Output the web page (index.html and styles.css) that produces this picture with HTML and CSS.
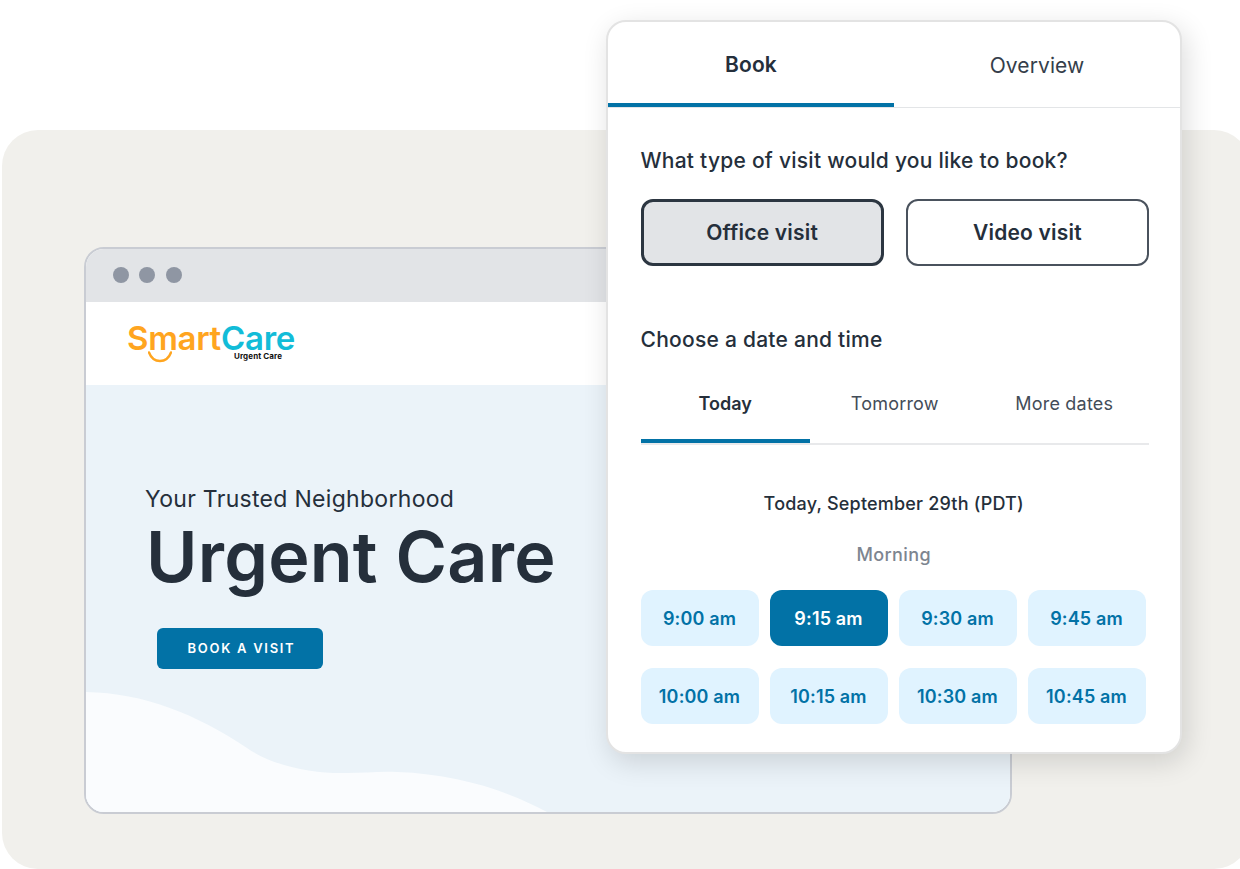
FILE: index.html
```html
<!DOCTYPE html>
<html>
<head>
    <meta charset="utf-8">
    <title>SmartCare Urgent Care</title>
    <link rel="stylesheet" href="styles.css">
</head>
<body>
    <div class="backdrop">
        <div class="browser">
            <div class="browser-bar">
                <span class="dot"></span>
                <span class="dot"></span>
                <span class="dot"></span>
            </div>
            <div class="site-header">
                <div class="logo">
                    <div class="logo-name"><span class="logo-smart">Smart</span><span class="logo-care">Care</span></div>
                    <svg class="logo-smile" width="24" height="12" viewBox="0 0 24 12">
                        <path d="M1 1.5C3 7 7 10 12 10S21 7 23 1.5" fill="none" stroke="#ffa51f" stroke-width="2.4" stroke-linecap="round"/>
                    </svg>
                    <div class="logo-sub">Urgent Care</div>
                </div>
            </div>
            <div class="hero">
                <p class="hero-kicker">Your Trusted Neighborhood</p>
                <h1 class="hero-title">Urgent Care</h1>
                <div class="hero-btn">BOOK A VISIT</div>
                <svg class="hero-wave" width="461" height="122" viewBox="0 0 461 122">
                    <path d="M0 2C58 3 110 24 161 58C190 78 232 84 261 83C278 83 295 81 311 82C370 84 420 100 461 122L0 122Z" fill="#fafcfe"/>
                </svg>
            </div>
        </div>
    </div>

    <div class="panel">
        <div class="tabs">
            <div class="tab active">Book</div>
            <div class="tab">Overview</div>
        </div>
        <div class="panel-body">
            <div class="question">What type of visit would you like to book?</div>
            <div class="visit-types">
                <div class="visit-btn selected">Office visit</div>
                <div class="visit-btn">Video visit</div>
            </div>
            <div class="question date-question">Choose a date and time</div>
            <div class="date-tabs">
                <div class="date-tab active">Today</div>
                <div class="date-tab">Tomorrow</div>
                <div class="date-tab">More dates</div>
            </div>
            <div class="date-label">Today, September 29th (PDT)</div>
            <div class="period-label">Morning</div>
            <div class="slots">
                <div class="slot">9:00 am</div>
                <div class="slot active">9:15 am</div>
                <div class="slot">9:30 am</div>
                <div class="slot">9:45 am</div>
                <div class="slot">10:00 am</div>
                <div class="slot">10:15 am</div>
                <div class="slot">10:30 am</div>
                <div class="slot">10:45 am</div>
            </div>
        </div>
    </div>
</body>
</html>
```

FILE: styles.css
```css
* {
    margin: 0;
    padding: 0;
    box-sizing: border-box;
}

html,
body {
    height: 869px;
    overflow: hidden;
}

body {
    position: relative;
    background: white;
    font-family: Inter, "Noto Sans", sans-serif;
    color: #252f3b;
    padding-top: 130px;
    padding-left: 2px;
}

.backdrop {
    width: 1248px;
    height: 739px;
    background: #f1f0ec;
    border-radius: 36px;
    padding: 117px 0 0 82px;
}

/* browser window */
.browser {
    width: 928px;
    height: 567px;
    border: 2px solid #c9ccd3;
    border-radius: 20px;
    overflow: hidden;
    display: flex;
    flex-direction: column;
    background: white;
}

.browser-bar {
    height: 53px;
    flex-shrink: 0;
    background: #e2e4e7;
    display: flex;
    align-items: center;
    gap: 10.5px;
    padding: 0 0 1px 26.7px;
}

.dot {
    width: 16px;
    height: 16px;
    border-radius: 50%;
    background: #8f96a3;
}

.site-header {
    height: 83px;
    flex-shrink: 0;
    padding: 22px 0 0 41px;
}

.logo {
    position: relative;
    width: 170px;
}

.logo-name {
    font-size: 33px;
    font-weight: 600;
    line-height: 28px;
    letter-spacing: -0.3px;
}

.logo-smart {
    color: #ffa51f;
}

.logo-care {
    color: #12bcd8;
}

.logo-smile {
    position: absolute;
    left: 21px;
    top: 27px;
}

.logo-sub {
    position: absolute;
    left: 107px;
    top: 28px;
    font-size: 8px;
    line-height: 9px;
    font-weight: 700;
    letter-spacing: 0.1px;
    color: #111;
}

.hero {
    position: relative;
    flex: 1;
    background: #ebf3f9;
    padding: 99px 0 0 59px;
}

.hero-kicker {
    font-size: 23px;
    line-height: 30px;
    letter-spacing: 0.3px;
}

.hero-title {
    font-size: 70px;
    font-weight: 600;
    line-height: 88px;
    margin: -1px 0 0 1px;
    letter-spacing: 0.2px;
}

.hero-btn {
    width: 166px;
    height: 41px;
    margin: 27px 0 0 12px;
    padding: 0 0 1px 3px;
    background: #0272a6;
    border-radius: 6px;
    color: white;
    font-size: 13px;
    font-weight: 600;
    letter-spacing: 1.7px;
    display: flex;
    align-items: center;
    justify-content: center;
}

.hero-wave {
    position: absolute;
    left: 0;
    bottom: 0;
}

/* booking panel */
.panel {
    position: absolute;
    left: 606px;
    top: 20px;
    width: 576px;
    height: 734px;
    background: white;
    border: 2px solid #e3e3e3;
    border-radius: 20px;
    box-shadow: 4px 8px 28px rgba(0,0,0,0.14);
}

.tabs {
    display: flex;
    height: 86px;
    border-bottom: 1px solid #e3e5e7;
}

.tab {
    flex: 1;
    display: flex;
    align-items: center;
    justify-content: center;
    padding-top: 1px;
    font-size: 21px;
    letter-spacing: 0.1px;
    color: #353e4a;
}

.tab.active {
    padding-top: 4px;
    font-weight: 600;
    color: #252f3b;
    border-bottom: 4px solid #0272a6;
}

.panel-body {
    padding: 39px 31px 0 32.5px;
}

.question {
    font-size: 21px;
    font-weight: 500;
    line-height: 28px;
    letter-spacing: 0.25px;
}

.visit-types {
    display: grid;
    grid-template-columns: 1fr 1fr;
    gap: 22px;
    margin-top: 24px;
}

.visit-btn {
    height: 67px;
    display: flex;
    align-items: center;
    justify-content: center;
    border: 2px solid #4a525d;
    border-radius: 12px;
    font-size: 21px;
    font-weight: 600;
    letter-spacing: 0.2px;
}

.visit-btn.selected {
    border: 3px solid #2c3641;
    background: #e2e4e7;
}

.date-question {
    margin-top: 60px;
}

.date-tabs {
    display: flex;
    margin-top: 22px;
    height: 69px;
    border-bottom: 2px solid #e8e9eb;
}

.date-tab {
    flex: 1;
    display: flex;
    align-items: center;
    justify-content: center;
    padding-bottom: 12px;
    font-size: 18px;
    letter-spacing: 0.2px;
    color: #434c58;
}

.date-tab.active {
    padding-bottom: 9px;
    font-weight: 600;
    letter-spacing: 0;
    color: #252f3b;
    border-bottom: 4px solid #0272a6;
}

.date-label {
    margin-top: 47px;
    padding-right: 2px;
    text-align: center;
    font-size: 18px;
    font-weight: 500;
    line-height: 24px;
    letter-spacing: 0.2px;
}

.period-label {
    margin-top: 27px;
    padding-right: 2px;
    text-align: center;
    font-size: 18px;
    font-weight: 500;
    line-height: 24px;
    letter-spacing: 0.4px;
    color: #7d8590;
}

.slots {
    display: grid;
    grid-template-columns: repeat(4, 118px);
    column-gap: 11px;
    row-gap: 22px;
    margin-top: 23px;
}

.slot {
    height: 56px;
    display: flex;
    align-items: center;
    justify-content: center;
    background: #e0f3ff;
    border-radius: 12px;
    color: #0272a6;
    font-size: 18px;
    font-weight: 600;
    letter-spacing: 0.15px;
}

.slot.active {
    background: #0272a6;
    color: white;
}
```
